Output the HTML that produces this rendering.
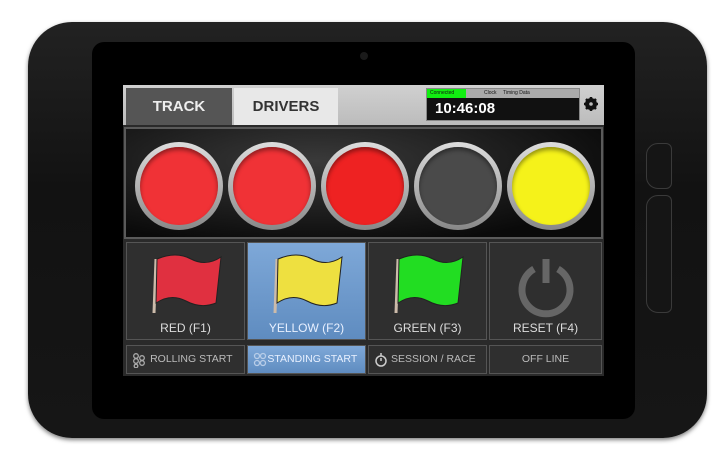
<!DOCTYPE html>
<html><head><style>
*{margin:0;padding:0;box-sizing:border-box}
body{width:726px;height:460px;background:#fff;position:relative;overflow:hidden;font-family:"Liberation Sans",Arial,sans-serif}
.dev{position:absolute;left:28px;top:22px;width:679px;height:416px;border-radius:44px;background:linear-gradient(180deg,#222,#121212 40%,#161616);box-shadow:0 2px 4px rgba(0,0,0,.5)}
.bez{position:absolute;left:92px;top:42px;width:543px;height:377px;border-radius:12px;background:#000}
.ui{position:absolute;left:123px;top:85px;width:481px;height:291px;background:#2a2a2a}
.hdr{position:absolute;left:0;top:0;width:481px;height:40px;background:linear-gradient(#d0d0d0,#bcbcbc)}
.tab{position:absolute;top:3px;height:37px;font-weight:bold;font-size:15px;text-align:center;line-height:37px}
.panel{position:absolute;left:1px;top:42px;width:479px;height:112px;background:radial-gradient(ellipse at 40% 30%,#3a3a3a,#0a0a0a 80%);border:2px solid #5a5a5a}
.c{position:absolute;top:13px;width:88px;height:88px;border-radius:50%;background:linear-gradient(#ddd,#888);padding:5px}
.c div{width:100%;height:100%;border-radius:50%;box-shadow:inset 0 3px 4px rgba(0,0,0,.4)}
.b{position:absolute;top:157px;height:98px;background:#2f2f2f;border:1px solid #555;color:#ddd;font-size:12px;text-align:center}
.b span{position:absolute;left:0;right:0;bottom:4px}
.s{position:absolute;top:260px;height:29px;background:#2f2f2f;border:1px solid #555;color:#bbb;font-size:10.5px;line-height:27px;text-align:center}
.s svg{position:absolute;left:5px;top:6px}
.sel{background:linear-gradient(#7ea8d8,#5f8cc0)!important;color:#e8f0ff!important}
.side{position:absolute;border:1px solid #3a3a3a;border-radius:12px 6px 6px 12px;background:#151515}
</style></head><body>
<div class="dev"></div>
<div class="side" style="left:646px;top:143px;width:26px;height:46px"></div>
<div class="side" style="left:646px;top:195px;width:26px;height:118px"></div>
<div class="bez"></div>
<div style="position:absolute;left:360px;top:52px;width:8px;height:8px;border-radius:50%;background:#1a1a1a"></div>
<div class="ui">
 <div class="hdr">
  <div class="tab" style="left:3px;width:106px;background:#555;color:#eee">TRACK</div>
  <div class="tab" style="left:111px;width:104px;background:#e8e8e8;color:#333">DRIVERS</div>
  <div style="position:absolute;left:303px;top:3px;width:154px;height:33px;background:#111;border:1px solid #888">
   <div style="position:absolute;left:0;top:0;width:152px;height:9px;background:#aaa;font-size:5px;color:#111;line-height:9px">
    <span style="position:absolute;left:0;width:39px;background:#1e1;height:9px;padding-left:3px">Connected</span>
    <span style="position:absolute;left:57px">Clock</span><span style="position:absolute;left:76px">Timing Data</span></div>
   <div style="position:absolute;left:8px;top:11px;color:#fff;font-size:15px;font-weight:bold">10:46:08</div>
  </div>
  <svg style="position:absolute;left:461px;top:12px" width="14" height="14" viewBox="0 0 14 14"><circle cx="7" cy="7" r="4.5" fill="none" stroke="#111" stroke-width="3"/><g stroke="#111" stroke-width="2.5"><line x1="7" y1="0" x2="7" y2="14"/><line x1="0" y1="7" x2="14" y2="7"/><line x1="2" y1="2" x2="12" y2="12"/><line x1="12" y1="2" x2="2" y2="12"/></g><circle cx="7" cy="7" r="1.8" fill="#bbb"/></svg>
 </div>
 <div class="panel">
  <div class="c" style="left:9px"><div style="background:#f03236"></div></div>
  <div class="c" style="left:102px"><div style="background:#f03236"></div></div>
  <div class="c" style="left:195px"><div style="background:#ee2222"></div></div>
  <div class="c" style="left:288px"><div style="background:#4a4a4a"></div></div>
  <div class="c" style="left:381px"><div style="background:#f5f21a"></div></div>
 </div>
 <div class="b" style="left:3px;width:119px"><svg width="80" height="70" style="margin-top:8px" viewBox="0 0 80 70"><line x1="10" y1="8" x2="8" y2="62" stroke="#cba" stroke-width="3"/><path d="M11 8 Q30 0 45 8 T75 6 L70 52 Q55 58 40 50 T10 52Z" fill="#e03040" stroke="#222"/></svg><span>RED (F1)</span></div>
 <div class="b sel" style="left:124px;width:119px"><svg width="80" height="70" style="margin-top:8px" viewBox="0 0 80 70"><line x1="10" y1="8" x2="8" y2="62" stroke="#cba" stroke-width="3"/><path d="M11 8 Q30 0 45 8 T75 6 L70 52 Q55 58 40 50 T10 52Z" fill="#eee040" stroke="#222"/></svg><span>YELLOW (F2)</span></div>
 <div class="b" style="left:245px;width:119px"><svg width="80" height="70" style="margin-top:8px" viewBox="0 0 80 70"><line x1="10" y1="8" x2="8" y2="62" stroke="#cba" stroke-width="3"/><path d="M11 8 Q30 0 45 8 T75 6 L70 52 Q55 58 40 50 T10 52Z" fill="#22dd22" stroke="#222"/></svg><span>GREEN (F3)</span></div>
 <div class="b" style="left:366px;width:113px"><svg width="64" height="64" style="margin-top:12px" viewBox="0 0 64 64"><path d="M20 14 A24 24 0 1 0 44 14" fill="none" stroke="#666" stroke-width="7"/><line x1="32" y1="4" x2="32" y2="28" stroke="#666" stroke-width="7"/></svg><span>RESET (F4)</span></div>
 <div class="s" style="left:3px;width:119px"><svg width="14" height="16" viewBox="0 0 14 16" fill="none" stroke="#aaa" stroke-width="1.3"><circle cx="4" cy="4" r="2.3"/><circle cx="10" cy="6" r="2.3"/><circle cx="4" cy="9" r="2.3"/><circle cx="10" cy="11" r="2.3"/><circle cx="4" cy="14" r="1.8"/></svg>&nbsp;&nbsp;&nbsp;&nbsp;ROLLING START</div>
 <div class="s sel" style="left:124px;width:119px"><svg width="14" height="16" viewBox="0 0 14 16" fill="none" stroke="#b8cde8" stroke-width="1.3"><circle cx="4" cy="4" r="2.5"/><circle cx="10" cy="4" r="2.5"/><circle cx="4" cy="11" r="2.5"/><circle cx="10" cy="11" r="2.5"/></svg>&nbsp;&nbsp;&nbsp;&nbsp;STANDING START</div>
 <div class="s" style="left:245px;width:119px"><svg width="14" height="16" viewBox="0 0 14 16" fill="none" stroke="#ccc" stroke-width="1.5"><circle cx="7" cy="9" r="5"/><line x1="7" y1="1" x2="7" y2="4"/><line x1="7" y1="9" x2="7" y2="6"/></svg>&nbsp;&nbsp;&nbsp;&nbsp;SESSION / RACE</div>
 <div class="s" style="left:366px;width:113px">OFF LINE</div>
</div>
</body></html>
